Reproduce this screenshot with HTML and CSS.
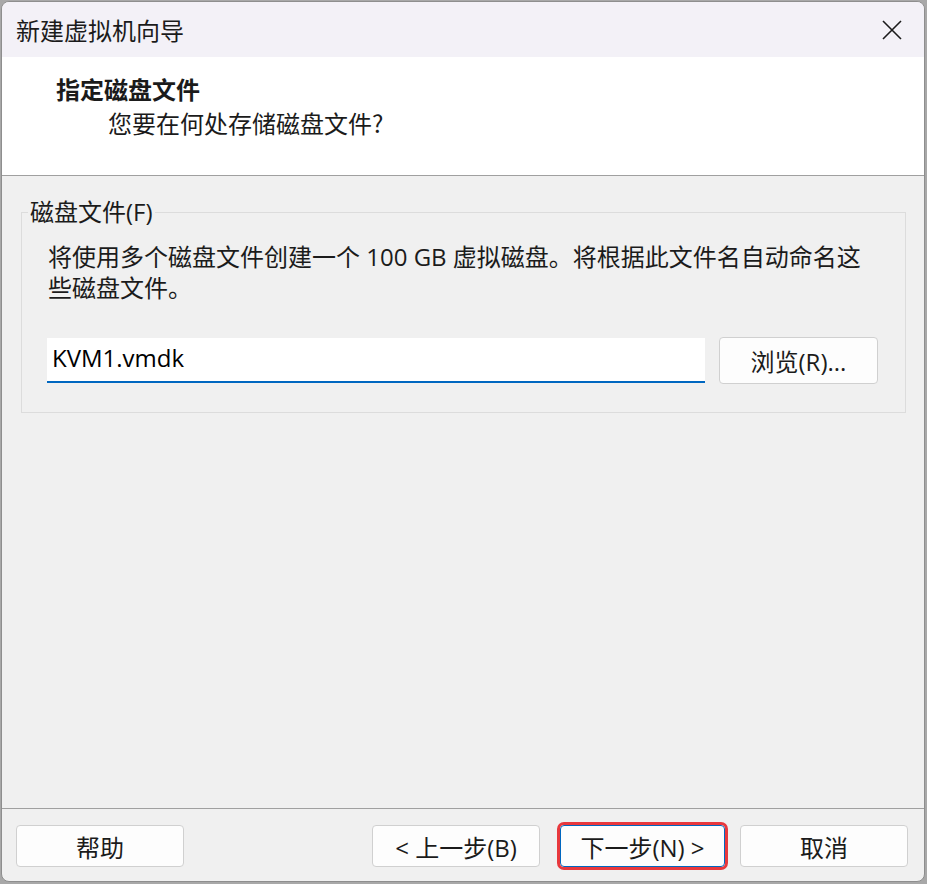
FILE: index.html
```html
<!DOCTYPE html>
<html>
	<head>
		<meta charset="UTF-8">
		<meta name="viewport" content="width=device-width, initial-scale=1.0">
		<title>新建虚拟机向导</title>
		<link rel="stylesheet" href="styles.css">
	</head>
	<body>
		<div class="window">
			<!-- 标题栏 -->
			<div class="titlebar">
				<span class="title">新建虚拟机向导</span>
				<button class="close" title="关闭">
					<svg width="20" height="20" viewBox="0 0 20 20">
						<path d="M1 1 L19 19 M19 1 L1 19" stroke="#1b1b1b" stroke-width="1.6" fill="none" />
					</svg>
				</button>
			</div>

			<!-- 向导页头 -->
			<div class="page-head">
				<div class="head-title">指定磁盘文件</div>
				<div class="head-sub">您要在何处存储磁盘文件?</div>
			</div>

			<div class="content">
				<fieldset class="group">
					<legend>磁盘文件(F)</legend>
					<p class="desc">将使用多个磁盘文件创建一个 100 GB 虚拟磁盘。将根据此文件名自动命名这些磁盘文件。</p>
					<div class="file-row">
						<input class="path" type="text" value="KVM1.vmdk">
						<button class="btn browse">浏览(R)...</button>
					</div>
				</fieldset>
			</div>

			<!-- 底部按钮 -->
			<div class="footer">
				<button class="btn">帮助</button>
				<div class="spacer"></div>
				<button class="btn">&lt; 上一步(B)</button>
				<button class="btn next">下一步(N) &gt;</button>
				<button class="btn">取消</button>
			</div>
		</div>
	</body>
</html>
```

FILE: styles.css
```css
body {
	margin: 0;
	padding: 0;
	background-color: #a8a8a8;
	font-family: "Open Sans", "Noto Sans CJK SC", sans-serif;
	color: #1b1b1b;
	overflow: hidden;
}

.window {
	box-sizing: border-box;
	width: 924px;
	height: 881px;
	margin: 1px 2px 2px 1px;
	border: 1px solid #8e8e8e;
	border-radius: 8px;
	overflow: hidden;
	background-color: #f0f0f0;
	display: flex;
	flex-direction: column;
}

.titlebar {
	height: 55px;
	background-color: #f3f1f7;
	display: flex;
	align-items: center;
}

.title {
	flex: 1;
	padding-left: 14px;
	font-size: 24px;
	font-family: "Noto Sans CJK SC", sans-serif;
}

.close {
	width: 64px;
	height: 55px;
	border: none;
	background: transparent;
	display: flex;
	justify-content: center;
	align-items: center;
	padding: 0;
}

.page-head {
	height: 119px;
	box-sizing: border-box;
	padding-top: 15px;
	background-color: #fff;
	border-bottom: 1px solid #a0a0a0;
	font-size: 24px;
	line-height: 34px;
	font-family: "Noto Sans CJK SC", sans-serif;
}

.head-title {
	padding-left: 54px;
	font-weight: bold;
}

.head-sub {
	padding-left: 106px;
}

.content {
	flex: 1;
	padding: 22px 18px 0 19px;
}

.group {
	margin: 0;
	padding: 0 26px 28px 26px;
	border: 1px solid #dcdcdc;
}

.group legend {
	margin-left: -20px;
	padding: 0 2px;
	font-size: 24px;
	line-height: 28px;
}

.desc {
	margin: 15px 0 34px 0;
	font-size: 24px;
	line-height: 31px;
}

.file-row {
	display: flex;
	align-items: flex-start;
	gap: 14px;
}

.path {
	box-sizing: border-box;
	width: 658px;
	height: 45px;
	margin: 1px 0 0 -1px;
	padding: 0 5px 5px 5px;
	border: none;
	border-bottom: 2px solid #0067c0;
	background-color: #fff;
	font-family: "Open Sans", sans-serif;
	font-size: 24px;
	color: #000;
	outline: none;
}

.btn {
	box-sizing: border-box;
	width: 168px;
	height: 42px;
	border: 1px solid #d0d0d0;
	border-radius: 4px;
	background-color: #fdfdfd;
	font-family: "Open Sans", "Noto Sans CJK SC", sans-serif;
	font-size: 24px;
	color: #1b1b1b;
	padding: 0;
}

.browse {
	width: 159px;
	height: 47px;
}

.footer {
	border-top: 1px solid #a0a0a0;
	padding: 16px 16px 14px 14px;
	display: flex;
	align-items: center;
}

.spacer {
	flex: 1;
}

.next {
	width: 165px;
	margin: 0 15px 0 20px;
	border-color: #0067c0;
	outline: 3px solid #e8383d;
	border-radius: 4px;
}
```
